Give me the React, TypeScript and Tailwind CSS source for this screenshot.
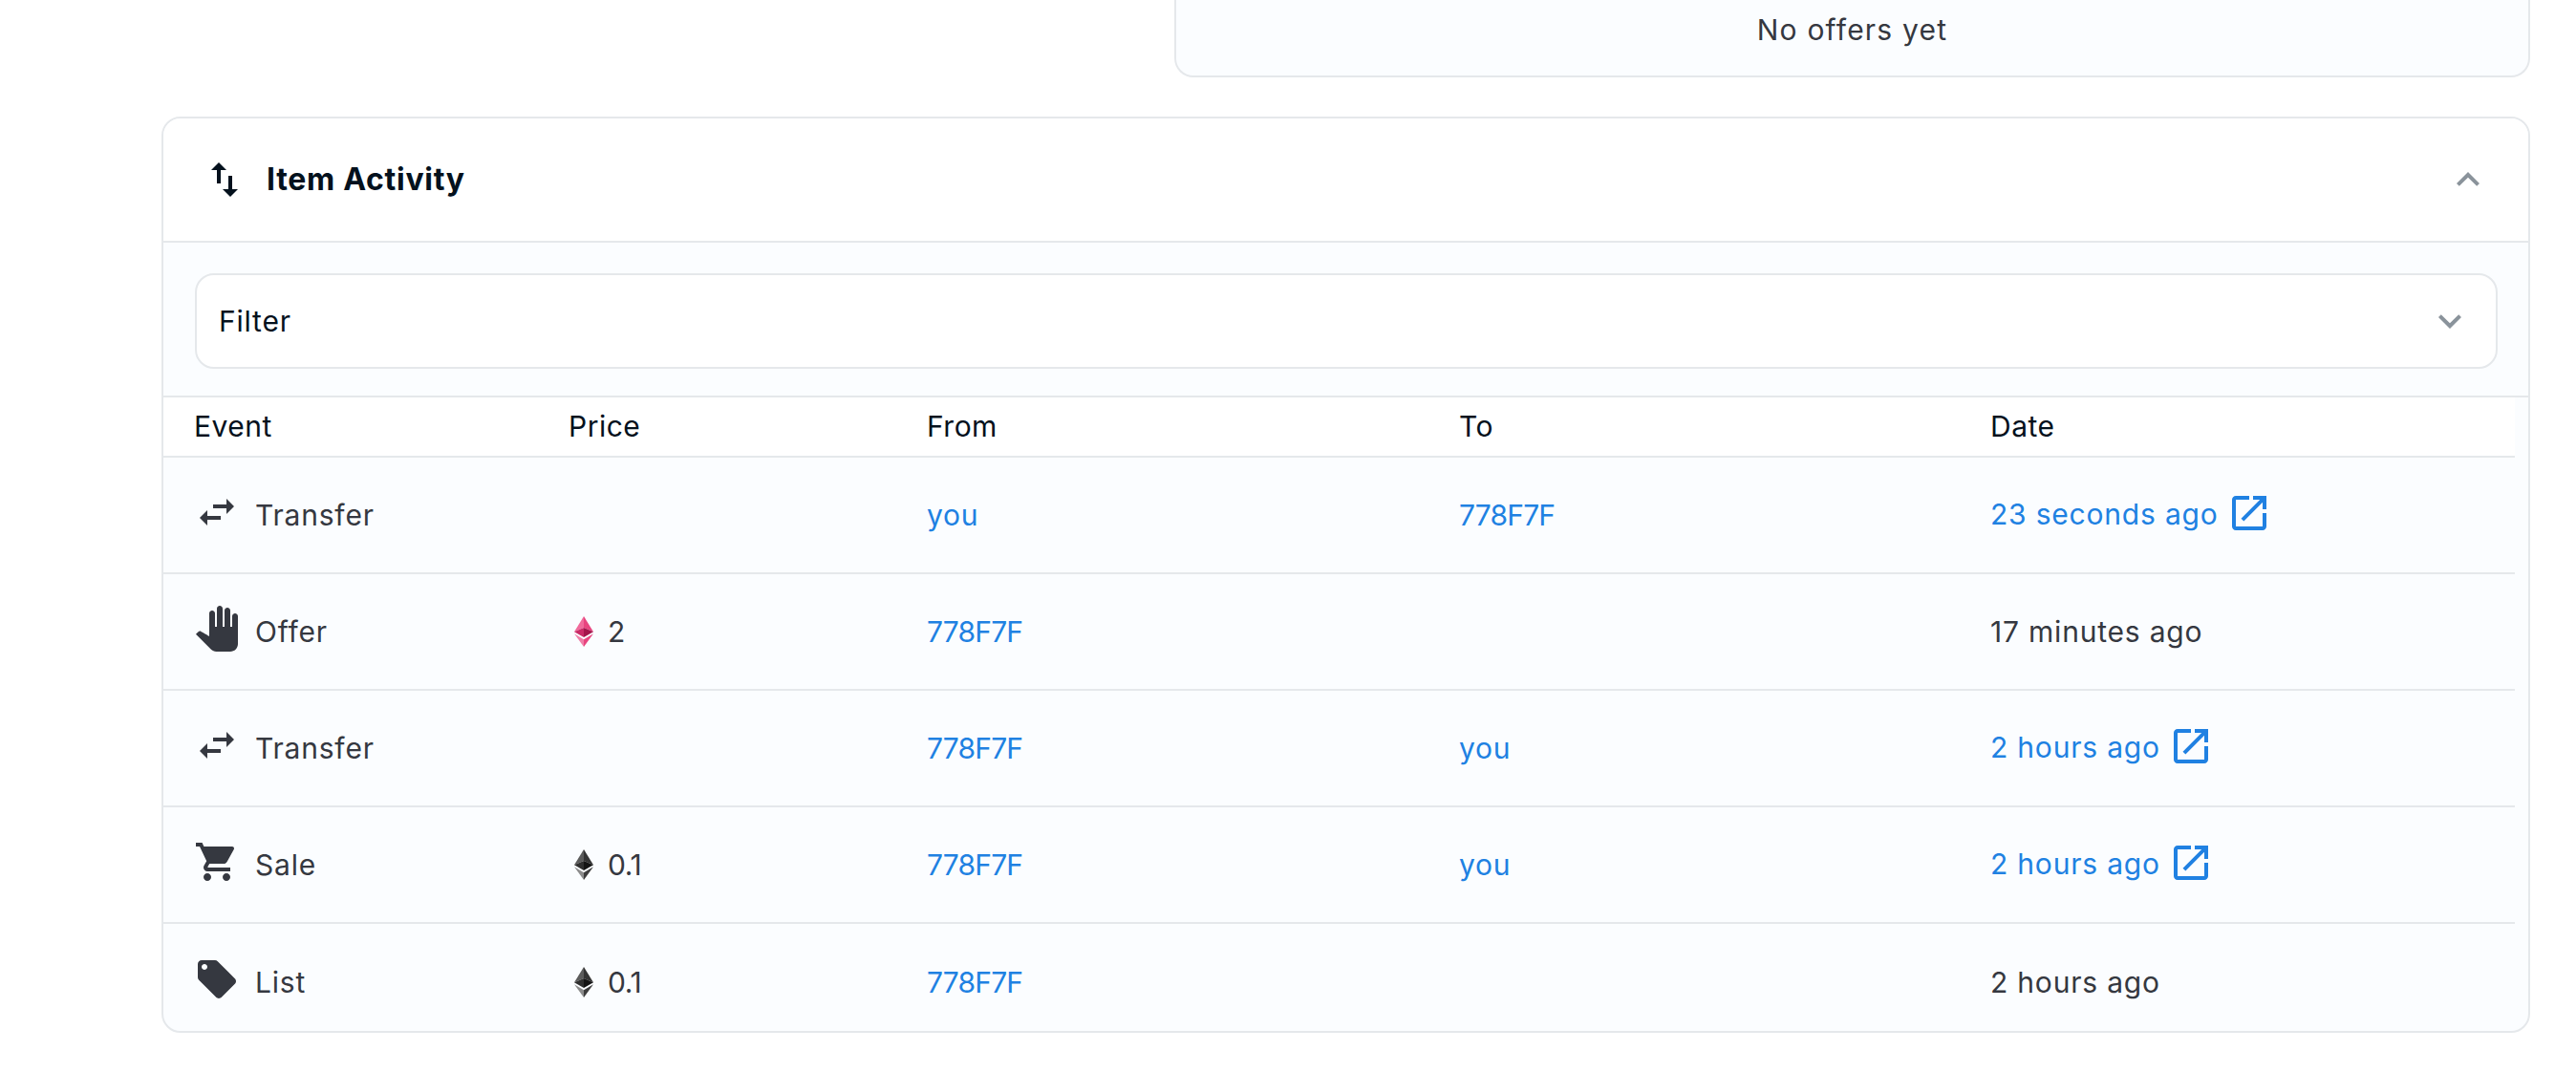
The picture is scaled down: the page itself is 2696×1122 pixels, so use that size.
import React from "react";

const P = {
  swap: "M6.99 11L3 15l3.99 4v-3H14v-2H6.99v-3zM21 9l-3.99-4v3H10v2h7.01v3L21 9z",
  hand: "M23 5.5V20c0 2.2-1.8 4-4 4h-7.3c-1.08 0-2.1-.43-2.85-1.19L1 14.83s1.26-1.23 1.3-1.25c.22-.19.49-.29.79-.29.22 0 .42.06.6.16.04.01 4.31 2.46 4.31 2.46V4c0-.83.67-1.5 1.5-1.5S11 3.17 11 4v7h1V1.5c0-.83.67-1.5 1.5-1.5S15 .67 15 1.5V11h1V2.5c0-.83.67-1.5 1.5-1.5s1.5.67 1.5 1.5V11h1V5.5c0-.83.67-1.5 1.5-1.5s1.5.67 1.5 1.5z",
  cart: "M7 18c-1.1 0-1.99.9-1.99 2S5.9 22 7 22s2-.9 2-2-.9-2-2-2zM1 2v2h2l3.6 7.59-1.35 2.45c-.16.28-.25.61-.25.96 0 1.1.9 2 2 2h12v-2H7.42c-.14 0-.25-.11-.25-.25l.03-.12.9-1.63h7.45c.75 0 1.41-.41 1.75-1.03l3.58-6.49c.08-.14.12-.31.12-.48 0-.55-.45-1-1-1H5.21l-.94-2H1zm16 16c-1.1 0-1.99.9-1.99 2s.89 2 1.99 2 2-.9 2-2-.9-2-2-2z",
  tag: "M21.41 11.58l-9-9C12.05 2.22 11.55 2 11 2H4c-1.1 0-2 .9-2 2v7c0 .55.22 1.05.59 1.42l9 9c.36.36.86.58 1.41.58.55 0 1.05-.22 1.41-.59l7-7c.37-.36.59-.86.59-1.41 0-.55-.23-1.06-.59-1.42zM5.5 7C4.67 7 4 6.33 4 5.5S4.67 4 5.5 4 7 4.67 7 5.5 6.33 7 5.5 7z",
  open: "M19 19H5V5h7V3H5c-1.11 0-2 .9-2 2v14c0 1.1.89 2 2 2h14c1.1 0 2-.9 2-2v-7h-2v7zM14 3v2h3.59l-9.83 9.83 1.41 1.41L19 6.41V10h2V3h-7z",
  vert: "M16 17.01V10h-2v7.01h-3L15 21l4-3.99h-3zM9 3L5 6.99h3V14h2V6.99h3L9 3z",
  less: "M12 8l-6 6 1.41 1.41L12 10.83l4.59 4.58L18 14z",
  more: "M16.59 8.59L12 13.17 7.41 8.59 6 10l6 6 6-6z",
};

function Icon({ d, className }: { d: string; className: string }) {
  return (
    <svg viewBox="0 0 24 24" fill="currentColor" className={className}>
      <path d={d} />
    </svg>
  );
}

function Eth({ pink }: { pink?: boolean }) {
  const c = pink
    ? ["#e8447f", "#f06a9b", "#a3154b", "#c92a66", "#f07fa8", "#e8447f"]
    : ["#343434", "#5c5c5c", "#141414", "#2f2f2f", "#8c8c8c", "#3c3c3c"];
  return (
    <svg viewBox="0 0 20 32" className="h-[32px] w-[20px] shrink-0">
      <polygon points="10,0 0,16.3 10,12" fill={c[1]} />
      <polygon points="10,0 20,16.3 10,12" fill={c[0]} />
      <polygon points="0,16.3 10,22 10,12" fill={c[3]} />
      <polygon points="20,16.3 10,22 10,12" fill={c[2]} />
      <polygon points="0,18.3 10,32 10,24.2" fill={c[4]} />
      <polygon points="20,18.3 10,32 10,24.2" fill={c[5]} />
    </svg>
  );
}

const gridCols = "grid grid-cols-[392px_375px_557px_556px_1fr]";

const rows = [
  { icon: P.swap, name: "Transfer", from: "you", to: "778F7F", date: "23 seconds ago", link: true },
  { icon: P.hand, name: "Offer", price: "2", pink: true, from: "778F7F", date: "17 minutes ago" },
  { icon: P.swap, name: "Transfer", from: "778F7F", to: "you", date: "2 hours ago", link: true },
  { icon: P.cart, name: "Sale", price: "0.1", from: "778F7F", to: "you", date: "2 hours ago", link: true },
  { icon: P.tag, name: "List", price: "0.1", from: "778F7F", date: "2 hours ago" },
];

type Row = (typeof rows)[number] & { price?: string; pink?: boolean; to?: string; link?: boolean };

function Addr({ v }: { v?: string }) {
  return (
    <span className={`text-[#2081e2] ${v === "778F7F" ? "tracking-[-0.8px]" : "tracking-[0.8px]"}`}>{v ?? ""}</span>
  );
}

export default function App() {
  return (
    <div className="flex h-[1122px] flex-col items-end overflow-hidden bg-white pl-[169px] pr-[48px] font-['Inter','Liberation_Sans',sans-serif] text-[30px] tracking-[0.8px] text-[#353840]">
      <div className="flex h-[81px] w-[1419px] items-start justify-center rounded-b-[20px] border-x-2 border-b-2 border-[#e5e8eb] bg-[#fbfdff] pt-[12px] leading-[38px] tracking-[1.2px]">
        No offers yet
      </div>

      <div className="mt-[41px] flex h-[959px] w-full flex-col overflow-hidden rounded-[20px] border-2 border-[#e5e8eb] bg-[#fbfdff]">
        <div className="flex h-[130px] shrink-0 items-center justify-between border-b-2 border-[#e5e8eb] bg-white pl-[40px] pr-[39px]">
          <div className="flex items-center gap-[20px]">
            <Icon d={P.vert} className="h-[48px] w-[48px] text-[#04111d]" />
            <span className="mb-[1px] text-[32px] font-bold tracking-[0.7px] text-[#04111d]">Item Activity</span>
          </div>
          <Icon d={P.less} className="h-[48px] w-[48px] text-[#8a939b]" />
        </div>

        <div className="flex h-[162px] shrink-0 items-start border-b-2 border-[#e5e8eb] pl-[33px] pr-[32px] pt-[32px]">
          <div className="flex h-[100px] w-full items-center justify-between rounded-[20px] border-2 border-[#e5e8eb] bg-white pl-[23px] pr-[24px]">
            <span className="text-[#04111d]">Filter</span>
            <Icon d={P.more} className="h-[48px] w-[48px] text-[#8a939b]" />
          </div>
        </div>

        <div className="w-[2461px]">
          <div className={`${gridCols} h-[63px] items-center border-b-2 border-[#e5e8eb] bg-white pl-[32px] tracking-[0.5px] text-[#04111d]`}>
            <span>Event</span>
            <span>Price</span>
            <span>From</span>
            <span>To</span>
            <span>Date</span>
          </div>
          {(rows as Row[]).map((r, i) => (
            <div
              key={i}
              className={`${gridCols} h-[122px] items-center border-[#e5e8eb] pl-[32px] ${i < rows.length - 1 ? "border-b-2" : ""}`}
            >
              <div className="flex items-center gap-[16px]">
                <Icon d={r.icon} className="mb-[6px] h-[48px] w-[48px] shrink-0" />
                <span>{r.name}</span>
              </div>
              <div className="flex items-center gap-[15px] pl-[6px]">
                {r.price && <Eth pink={r.pink} />}
                {r.price && <span className="tracking-[-0.4px]">{r.price}</span>}
              </div>
              <Addr v={r.from} />
              <Addr v={r.to} />
              {r.link ? (
                <div className="flex items-center gap-[8px] text-[#2081e2]">
                  <span className="mb-[2px]">{r.date}</span>
                  <Icon d={P.open} className="mb-[4px] h-[48px] w-[48px]" />
                </div>
              ) : (
                <span>{r.date}</span>
              )}
            </div>
          ))}
        </div>
      </div>
    </div>
  );
}
